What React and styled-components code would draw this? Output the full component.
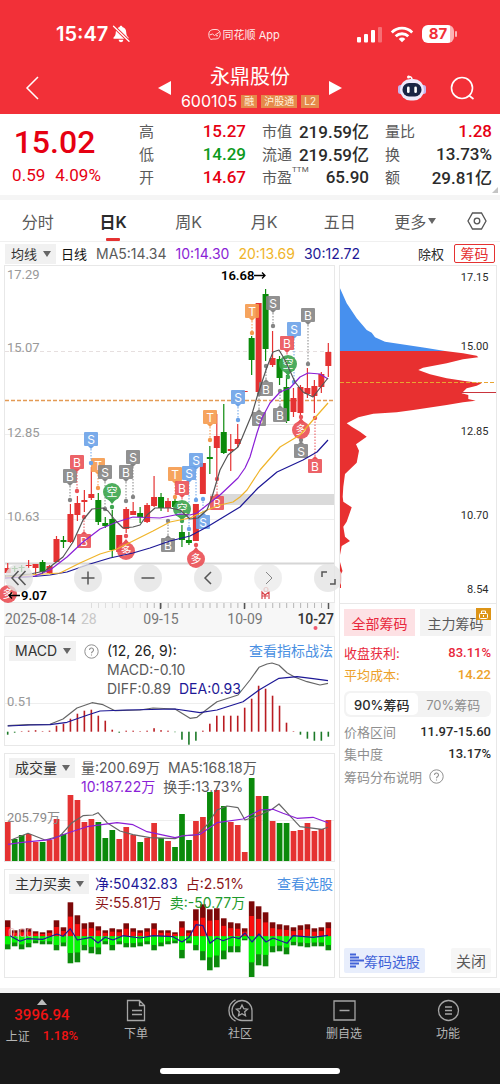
import React from "react";
import styled, { createGlobalStyle } from "styled-components";

const ui = `Inter, "Noto Sans CJK SC", sans-serif`;
const num = `Roboto, "Noto Sans CJK SC", sans-serif`;

const c = {
  brand: "#f23038",
  up: "#e53232",
  down: "#0b8a0b",
  rise: "#e60012",
  text: "#2b2b2b",
  sub: "#5a5a5a",
  mute: "#8f8f8f",
  line: "#e8e8e8",
  chip: "#f1f1f1",
  purple: "#8a1fd6",
  yellow: "#f0b429",
  navy: "#1d1896",
  blue: "#4a90e2",
};

const Global = createGlobalStyle`
  *, *::before, *::after { box-sizing: border-box; }
  body { margin: 0; background: #fff; font-family: ${ui}; color: ${c.text}; }
  button, select { font: inherit; color: inherit; border: 0; padding: 0; margin: 0; background: none; cursor: pointer; }
  svg { display: block; flex: none; }
  dl, dd, dt, h1, p { margin: 0; font-weight: inherit; }
`;

/* ---------- header ---------- */
const Header = styled.header`
  background: ${c.brand};
  color: #fff;
`;
const StatusBar = styled.div`
  display: flex;
  align-items: center;
  justify-content: space-between;
  height: 56px;
  padding: 12px 46px 0 56px;
`;
const StatusGroup = styled.div`
  display: flex;
  align-items: center;
  gap: ${(p) => p.$gap}px;
`;
const Clock = styled.span`
  font-size: 20px;
  font-weight: 600;
`;
const AppTag = styled.span`
  font-size: 11px;
  opacity: 0.9;
`;
const Battery = styled.span`
  position: relative;
  width: 32px;
  height: 18px;
  border-radius: 6px;
  background: linear-gradient(90deg, #fff 28px, #fbb3b6 28px);
  color: ${c.brand};
  font-size: 15px;
  font-weight: 700;
  line-height: 18px;
  text-align: center;
  &::after {
    content: "";
    position: absolute;
    right: -3px;
    top: 6px;
    width: 2px;
    height: 6px;
    border-radius: 1px;
    background: #fbb3b6;
  }
`;
const TitleBar = styled.div`
  display: grid;
  grid-template-columns: 1fr auto 1fr;
  align-items: center;
  height: 58px;
  padding: 6px 25px 0;
`;
const Stock = styled.div`
  display: flex;
  align-items: center;
  gap: 10px;
`;
const StockName = styled.div`
  display: flex;
  flex-direction: column;
  align-items: center;
`;
const Title = styled.h1`
  font-size: 20px;
  line-height: 26px;
`;
const CodeRow = styled.div`
  display: flex;
  align-items: center;
  gap: 4px;
  font-size: 16px;
  line-height: 22px;
`;
const Tag = styled.span`
  padding: 0 3px;
  background: #e58a4b;
  color: #fff3dc;
  font-size: 10px;
  line-height: 13px;
`;
const Actions = styled.div`
  display: flex;
  justify-content: flex-end;
  align-items: center;
  gap: 24px;
`;

/* ---------- quote ---------- */
const Quote = styled.section`
  position: relative;
  display: grid;
  grid-template-columns: 123fr 107fr 107fr 107fr;
  column-gap: 16px;
  height: 86px;
  padding: 5px 8px 0 0;
  border-bottom: 5px solid #f5f5f5;
  font-family: ${num};
`;
const PriceBox = styled.div`
  display: flex;
  flex-direction: column;
  align-items: center;
  color: ${c.rise};
  font-weight: 500;
`;
const Price = styled.span`
  padding-right: 14px;
  font-size: 32px;
  line-height: 46px;
`;
const Change = styled.span`
  display: flex;
  gap: 10px;
  padding-right: 10px;
  font-size: 17px;
  font-weight: 400;
  line-height: 20px;
`;
const Facts = styled.dl`
  display: flex;
  flex-direction: column;
`;
const Fact = styled.div`
  display: flex;
  justify-content: space-between;
  align-items: center;
  height: 23px;
  white-space: nowrap;
`;
const FactName = styled.dt`
  display: flex;
  font-size: 15px;
  color: ${c.sub};
`;
const Sup = styled.sup`
  font-size: 8px;
  line-height: 8px;
  vertical-align: top;
`;
const FactValue = styled.dd`
  font-size: 17px;
  font-weight: 500;
  color: ${(p) => p.$color || c.text};
`;
const Corner = styled.i`
  position: absolute;
  right: 2px;
  bottom: 2px;
  border: 3px solid #c4c4c4;
  border-top-color: transparent;
  border-left-color: transparent;
`;

/* ---------- tabs ---------- */
const Tabs = styled.nav`
  display: flex;
  height: 42px;
  border-bottom: 1px solid #f0f0f0;
`;
const Tab = styled.button`
  position: relative;
  display: flex;
  flex: 1;
  align-items: center;
  justify-content: center;
  gap: 2px;
  font-size: 16px;
  font-weight: ${(p) => (p.$on ? 600 : 400)};
  color: ${(p) => (p.$on ? c.text : c.sub)};
  &::after {
    content: "";
    display: ${(p) => (p.$on ? "block" : "none")};
    position: absolute;
    bottom: 0;
    width: 14px;
    height: 3px;
    border-radius: 1px;
    background: ${c.up};
  }
`;
const TabIcon = styled.button`
  display: grid;
  place-items: center;
  width: 47px;
`;

/* ---------- moving average row ---------- */
const MaRow = styled.div`
  display: flex;
  align-items: center;
  gap: 9px;
  height: 23px;
  padding: 0 5px;
  font-size: 14px;
  white-space: nowrap;
`;
const MaStart = styled.div`
  display: flex;
  align-items: center;
  gap: 5px;
  font-size: 13px;
  color: #111;
`;
const MaValue = styled.span`
  color: ${(p) => p.$color};
`;
const MaEnd = styled.div`
  display: flex;
  align-items: center;
  gap: 10px;
  margin-left: auto;
  font-size: 13px;
`;
const OutlineButton = styled.button`
  width: 41px;
  height: 19px;
  border: 1px solid ${c.up};
  border-radius: 2px;
  color: ${c.up};
  font-size: 14px;
  line-height: 17px;
`;
const Picker = styled.label`
  position: relative;
  display: block;
  height: 20px;
  background: ${c.chip};
  color: #333;
  svg {
    position: absolute;
    right: 5px;
    top: 7px;
    pointer-events: none;
  }
`;
const Select = styled.select`
  appearance: none;
  height: 20px;
  padding: 0 18px 0 6px;
  font-size: ${(p) => p.$size || 14}px;
  line-height: 20px;
`;

/* ---------- chart area ---------- */
const Body = styled.main`
  display: grid;
  grid-template-columns: 331fr 158fr;
  gap: 4px;
  padding: 0 3px 10px 4px;
  border-bottom: 5px solid #f3f3f3;
`;
const Column = styled.div`
  display: flex;
  flex-direction: column;
  min-width: 0;
`;
const Panel = styled.section`
  position: relative;
  display: grid;
  border: 1px solid ${c.line};
  margin-bottom: ${(p) => p.$gap || 0}px;
  > * {
    grid-area: 1 / 1;
  }
`;
const Chart = styled.svg`
  width: 100%;
  height: auto;
  font-family: ${num};
`;
const AxisStrip = styled.div`
  background: #f7f7f7;
`;
const PanelHead = styled.div`
  z-index: 1;
  display: flex;
  align-items: flex-start;
  align-self: start;
  gap: ${(p) => p.$gap || 6}px;
  padding: 4px 1px 0 4px;
  font-size: 14px;
`;
const Readout = styled.div`
  display: flex;
  flex-direction: column;
`;
const ReadLine = styled.div`
  display: flex;
  gap: 8px;
  font-size: 14px;
  line-height: 19px;
  color: ${c.sub};
  white-space: nowrap;
`;
const HeadLink = styled.a`
  margin-left: auto;
  color: ${c.blue};
  font-size: 14px;
  line-height: 20px;
  text-decoration: none;
  white-space: nowrap;
`;
const HelpSlot = styled.button`
  height: 20px;
  padding: 0 6px;
`;
const Controls = styled.div`
  position: absolute;
  z-index: 2;
  left: 0;
  right: -8px;
  bottom: 10px;
  display: flex;
  gap: 32px;
`;
const RoundButton = styled.button`
  display: grid;
  place-items: center;
  width: 28px;
  height: 28px;
  border-radius: 50%;
  background: rgba(228, 228, 228, 0.8);
  opacity: ${(p) => (p.$dim ? 0.7 : 1)};
  &:first-child {
    margin-right: auto;
  }
`;

/* ---------- chip distribution ---------- */
const ChipPanel = styled.aside`
  display: flex;
  flex-direction: column;
  border: 1px solid ${c.line};
`;
const ChipBody = styled.div`
  display: flex;
  flex: 1;
  flex-direction: column;
  padding: 5px 5px 4px 4px;
  border-top: 1px solid ${c.line};
`;
const Pair = styled.div`
  display: grid;
  grid-template-columns: 1fr 1fr;
  gap: 5px;
  margin-bottom: 5px;
`;
const ScopeButton = styled.button`
  position: relative;
  height: 27px;
  background: ${(p) => (p.$on ? "#fde1e4" : "#f3f3f3")};
  color: ${(p) => (p.$on ? "#e8283c" : c.sub)};
  font-size: 14px;
  white-space: nowrap;
`;
const LockBadge = styled.span`
  position: absolute;
  right: 0;
  top: -1px;
  display: grid;
  place-items: center;
  width: 15px;
  height: 12px;
  background: #dd9416;
`;
const StatRow = styled.div`
  display: flex;
  justify-content: space-between;
  align-items: center;
  height: 22px;
  font-size: 13px;
  color: ${(p) => p.$color || c.mute};
  white-space: nowrap;
`;
const StatValue = styled.span`
  font-family: ${num};
  font-weight: 500;
  color: ${(p) => p.$color || "inherit"};
`;
const Segment = styled.div`
  display: grid;
  grid-template-columns: 1fr 1fr;
  margin: 6px 0 3px;
  padding: 2px;
  border-radius: 6px;
  background: #f3f3f3;
`;
const SegmentButton = styled.button`
  height: 22px;
  border-radius: 5px;
  background: ${(p) => (p.$on ? "#fff" : "transparent")};
  color: ${(p) => (p.$on ? c.text : c.mute)};
  font-size: 13px;
  font-weight: ${(p) => (p.$on ? 500 : 400)};
  white-space: nowrap;
`;
const HelpLine = styled.button`
  display: flex;
  align-items: center;
  gap: 7px;
  height: 24px;
  color: ${c.mute};
  font-size: 13px;
`;
const ChipFoot = styled.div`
  display: flex;
  justify-content: space-between;
  margin-top: auto;
`;
const FootButton = styled.button`
  display: flex;
  align-items: center;
  height: 25px;
  padding: 0 5px;
  border-radius: 2px;
  background: ${(p) => (p.$primary ? "#e8eefc" : "#f6f6f6")};
  color: ${(p) => (p.$primary ? "#4263d8" : c.sub)};
  font-size: ${(p) => (p.$primary ? 14 : 15)}px;
  white-space: nowrap;
`;

/* ---------- bottom bar ---------- */
const Bottom = styled.footer`
  padding-bottom: 10px;
  background: #191919;
  color: #b5b5b5;
`;
const BottomNav = styled.nav`
  display: grid;
  grid-template-columns: 84fr 104fr 104fr 104fr 104fr;
  height: 75px;
`;
const NavItem = styled.button`
  display: flex;
  flex-direction: column;
  align-items: center;
  padding-top: 6px;
  gap: 3px;
  font-size: 12px;
  line-height: 18px;
`;
const IndexItem = styled.button`
  display: flex;
  flex-direction: column;
  align-items: center;
  padding-top: 6px;
  gap: 1px;
  font-size: 12px;
`;
const IndexValue = styled.span`
  color: #f01414;
  font-family: ${num};
  font-size: ${(p) => p.$size}px;
  font-weight: 500;
  line-height: 19px;
`;
const IndexRow = styled.span`
  display: flex;
  align-items: center;
  gap: 13px;
`;
const HomeBar = styled.div`
  width: 36%;
  height: 6px;
  margin: 0 auto;
  border-radius: 3px;
  background: #fff;
`;

/* ---------- data ---------- */
const xAt = (i) => 7.7 + 6.97 * i;

// [direction, body top, body bottom, wick top, wick bottom]
const candles = [
  ["r", 568, 573, 563, 573], ["g", 568, 569, 566, 572], ["g", 567, 568, 565, 572], ["r", 565, 566, 560, 568],
  ["r", 564, 568, 564, 574], ["g", 562, 572, 560, 574], ["r", 566, 573, 565, 574], ["r", 539, 562, 536, 562],
  ["g", 540, 542, 536, 548], ["r", 514, 542, 504, 543], ["r", 503, 515, 496, 521], ["r", 500, 502, 490, 512],
  ["r", 494, 498, 467, 500], ["g", 500, 522, 493, 525], ["g", 523, 526, 517, 528], ["g", 519, 550, 510, 557],
  ["r", 535, 552, 535, 552], ["r", 509, 529, 507, 533], ["r", 511, 515, 502, 515], ["g", 513, 517, 507, 523],
  ["r", 505, 522, 503, 523], ["r", 497, 506, 476, 507], ["g", 497, 508, 493, 511], ["r", 501, 508, 498, 512],
  ["g", 501, 507, 499, 507], ["g", 532, 540, 525, 547], ["g", 540, 543, 532, 545], ["r", 504, 541, 504, 541],
  ["r", 463, 494, 463, 494], ["g", 457, 459, 446, 474], ["r", 436, 448, 414, 478], ["g", 432, 453, 404, 454],
  ["r", 449, 451, 434, 471], ["r", 439, 444, 424, 447], ["r", 391, 392, 391, 392], ["g", 338, 360, 336, 375],
  ["r", 303, 392, 303, 392], ["g", 294, 349, 289, 361], ["r", 358, 365, 331, 367], ["g", 359, 378, 356, 385],
  ["g", 387, 421, 375, 423], ["r", 398, 412, 388, 417], ["r", 387, 413, 385, 417], ["r", 388, 394, 368, 398],
  ["r", 386, 396, 380, 413], ["r", 374, 387, 372, 393], ["r", 352, 366, 343, 377],
];

const ma = [
  [c.navy, "5,578 28,577 50,575 67,572 90,564 110,558 133,553 150,548 170,541 190,536 207,527 240,507 258,488 277,472 303,460 317,452 328,440"],
  [c.yellow, "5,577 28,575 60,573 80,563 100,554 117,549 133,541 153,531 170,522 190,518 207,510 220,505 233,502 240,497 247,490 260,470 280,447 300,435 313,420 328,403"],
  [c.purple, "5,578 35,576 50,570 67,557 83,542 100,529 117,522 133,517 160,518 180,514 190,515 197,513 207,505 220,495 238,478 245,468 250,457 257,433 262,418 270,403 280,392 290,388 300,377 308,373 320,374 328,379"],
  ["#555", "5,576 30,574 45,571 55,563 63,557 73,542 83,520 92,509 103,508 108,511 115,520 123,528 133,527 140,525 147,515 155,508 170,508 180,510 190,519 198,518 207,510 212,497 220,470 228,455 238,447 242,438 252,414 257,397 267,367 273,352 279,350 285,360 295,382 303,392 313,397 320,388 328,378"],
];

const tone = { gray: "#858585", red: "#ea5258", blue: "#6ba2e8", orange: "#f59a4d", green: "#3fa650" };
// [x, y of the flag, y of the anchor dot, letter, tone]
const flags = [
  [70, 476, 500, "B", "gray"], [77, 462, 491, "B", "red"], [98, 465, 488, "T", "orange"], [91, 439, 463, "S", "blue"],
  [105, 472, 509, "S", "gray"], [84, 541, 517, "B", "red"], [126, 472, 501, "B", "gray"], [133, 457, 497, "S", "gray"],
  [168, 545, 521, "B", "gray"], [175, 474, 497, "T", "orange"], [189, 473, 529, "S", "blue"], [182, 488, 505, "B", "red"],
  [196, 460, 500, "S", "blue"], [203, 522, 499, "S", "blue"], [217, 503, 479, "B", "red"], [210, 417, 440, "T", "orange"],
  [238, 397, 420, "S", "blue"], [252, 311, 333, "T", "orange"], [273, 303, 326, "S", "gray"], [308, 315, 364, "B", "gray"],
  [266, 389, 366, "B", "gray"], [259, 419, 394, "S", "gray"], [280, 415, 391, "B", "gray"], [294, 329, 382, "S", "blue"],
  [287, 343, 360, "B", "red"], [301, 451, 440, "S", "gray"], [315, 466, 418, "B", "red"],
];
const seals = [
  [112, 492, 507, "空", "green"], [126, 551, 536, "多", "red"], [182, 509, 521, "空", "green"], [196, 559, 545, "多", "red"],
  [288, 364, 377, "空", "green"], [301, 430, 417, "多", "red"], [8, 594, 594, "多", "red"],
];

const macdBars = [-3, -1, 0.5, 1, 1.5, 0.5, 1, 6, 8, 13, 18, 21, 22, 16, 11, 2, -1, 1, 1, 0.5, 1, 3.5, 1.5, 1, -0.5, -8, -13, -9, 1, 8, 16, 16, 16, 16, 24, 33, 46, 43, 36, 26, 9, 0.5, -3, -7, -9, -9, -5];

const volumes = "39r 22g 26g 27r 19r 19g 21r 42r 27g 66r 61r 39r 42r 39g 23g 31g 22r 34r 26r 19g 23r 38r 23g 20r 14g 47g 21g 40r 44r 69g 71r 55g 39r 36r 9r 83g 65r 65g 40r 38g 38g 30r 31r 38r 30r 32r 41r"
  .split(" ")
  .map((v) => [parseInt(v, 10), v.slice(-1)]);

const buys = [16, 6, 7, 8, 5, 4, 6, 16, 9, 34, 21, 13, 14, 10, 6, 8, 7, 13, 8, 6, 8, 13, 6, 6, 4, 15, 6, 27, 32, 27, 28, 18, 14, 13, 8, 35, 30, 24, 14, 12, 11, 9, 11, 12, 8, 9, 14];
const sells = [13, 10, 13, 11, 7, 8, 8, 14, 10, 27, 26, 14, 17, 18, 8, 14, 8, 11, 11, 10, 8, 14, 10, 8, 7, 22, 7, 14, 24, 34, 31, 23, 16, 16, 4, 42, 29, 30, 16, 15, 18, 9, 10, 11, 10, 10, 14];

/* ---------- small drawings ---------- */
const Caret = () => (
  <svg width="8" height="6" viewBox="0 0 8 6"><path d="M0 0h8L4 6z" fill="#666" /></svg>
);
const Help = () => (
  <svg width="15" height="15" viewBox="0 0 15 15" fill="none" stroke="#8f8f8f">
    <circle cx="7.5" cy="7.5" r="6.7" />
    <path d="M5.5 6a2 2 0 1 1 3 1.7c-.7.4-1 .8-1 1.5M7.5 10.4v1.2" strokeWidth="1.1" />
  </svg>
);
const Line = ({ d, color, w = 1.2 }) => <polyline points={d} fill="none" stroke={color} strokeWidth={w} strokeLinejoin="round" />;

function Flag({ x, y, dot, letter, color }) {
  const down = dot > y;
  const edge = down ? y + 7 : y - 7;
  return (
    <g>
      <path d={`M${x} ${edge}V${dot}`} stroke={color} strokeDasharray="1.5 1.5" />
      <circle cx={x} cy={dot} r="2.2" fill={color} />
      <rect x={x - 7} y={y - 7} width="14" height="14" rx="1" fill={color} opacity="0.9" />
      <path d={down ? `M${x - 3} ${edge}h6l-3 3z` : `M${x - 3} ${edge}h6l-3 -3z`} fill={color} />
      <text x={x} y={y + 4.5} fill="#fff" fontSize="12" textAnchor="middle" fontFamily="Inter, sans-serif">{letter}</text>
    </g>
  );
}

function Seal({ x, y, dot, letter, color }) {
  const s = dot > y ? 1 : -1;
  return (
    <g>
      <circle cx={x} cy={dot} r="2.2" fill={color} />
      {dot !== y && <path d={`M${x - 4} ${y + s * 7}h8l-4 ${s * 5}z`} fill={color} />}
      <circle cx={x} cy={y} r="9" fill={color} opacity="0.92" />
      <text x={x} y={y + 4} fill="#fff" fontSize="11" textAnchor="middle">{letter}</text>
    </g>
  );
}

function CandleChart() {
  return (
    <Chart viewBox="5 266 329 336" overflow="visible">
      <path d="M5 434.500H334M5 519.500H334" stroke="#eee" />
      <path d="M262 424.500H334" stroke="#e4e4e4" />
      <path d="M5 351.500H334" stroke="#e6dfdf" strokeDasharray="4 3" />
      <path d="M5 400.500H334" stroke="#e39a55" strokeWidth="1.300" strokeDasharray="4 2" />
      <rect x="210" y="494" width="124" height="11" fill="#dadada" />
      <path d="M5 563.500H334" stroke="#d6d6d6" strokeWidth="2" />
      <g fill="#999" fontSize="13">
        <text x="7" y="279">17.29</text>
        <text x="7" y="352">15.07</text>
        <text x="7" y="437">12.85</text>
        <text x="7" y="521">10.63</text>
      </g>
      {candles.map(([k, t, b, h, l], i) => (
        <g key={i} fill={k === "r" ? c.up : c.down} stroke={k === "r" ? c.up : c.down}>
          <path d={`M${xAt(i)} ${h}V${l}`} strokeWidth="1.200" />
          <rect x={xAt(i) - 3} y={t} width="6" height={Math.max(1, b - t)} stroke="none" />
        </g>
      ))}
      {flags.map(([x, y, dot, letter, t], i) => <Flag key={i} x={x} y={y} dot={dot} letter={letter} color={tone[t]} />)}
      {seals.map(([x, y, dot, letter, t], i) => <Seal key={i} x={x} y={y} dot={dot} letter={letter} color={tone[t]} />)}
      {ma.map(([color, d]) => <Line key={color} d={d} color={color} />)}
      <g fill="#000" fontSize="13" fontWeight="600">
        <text x="221" y="280">16.68</text>
        <text x="21" y="600">9.07</text>
      </g>
      <g fill="none" stroke="#000" strokeWidth="1.300">
        <path d="M254 275.500H265M262 272.500L265 275.500L262 278.500" />
        <path d="M20 595.500H9M12 592.500L9 595.500L12 598.500" />
      </g>
      <g fill="none" stroke="#d9434a" strokeWidth="1.200">
        <path d="M262 599v-7l3 3v4M269 599v-7l-4 3M262 596h6" />
        <circle cx="266" cy="589.500" r="2" stroke="#eeb0b0" />
      </g>
    </Chart>
  );
}

function TimeAxis() {
  const ticks = Array.from({ length: 35 }, (_, i) => 328.5 - i * 6.97);
  return (
    <AxisStrip>
      <Chart viewBox="4 603 331 33">
        {ticks.map((x, i) => <path key={i} d={`M${x} 603v5`} stroke={i > 26 ? "#ddd" : "#b5b5b5"} />)}
        <path d="M160.500 603v6M244.500 603v6M328.500 603v6" stroke="#555" strokeWidth="1.500" />
        <g fill="#777" fontSize="14">
          <text x="5" y="624">2025-08-14</text>
          <text x="81" y="624" fill="#c8c8c8">28</text>
          <text x="161" y="624" textAnchor="middle">09-15</text>
          <text x="245" y="624" textAnchor="middle">10-09</text>
          <text x="334" y="624" textAnchor="end" fontWeight="500" fill="#333">10-27</text>
        </g>
        <circle cx="315.500" cy="628" r="2" fill="#ee5a6e" />
      </Chart>
    </AxisStrip>
  );
}

function MacdChart() {
  return (
    <Chart viewBox="5 637 329 108">
      <path d="M5 703.500H334" stroke="#eee" />
      <text x="7" y="706" fill="#999" fontSize="13">0.51</text>
      {macdBars.map((v, i) => (
        <rect key={i} x={xAt(i) - 0.8} y={v > 0 ? 731.7 - v : 731.7} width="1.600" height={Math.abs(v)} fill={v > 0 ? "#b91c22" : "#1c7a28"} />
      ))}
      <Line color="#666" d="7.700,725.700 28,724.700 50,724.300 63,719 77,708 92,702.700 103,704.700 115,710.700 140,710 153,708 175,709 190,718.300 197,717.300 207,709.300 217,701.700 238,695 250,680 259,667.300 267,664 272,663 279,665.300 287,672.700 295,677.300 307,681.700 320,685 328,683.300" />
      <Line color="#1d1896" d="7.700,726 30,725 50,724.700 67,722.300 87,715.300 100,711 127,710 175,709 200,712.700 217,710 243,701.700 259,690 279,678.300 297,676.700 313,678.700 328,680.700" />
    </Chart>
  );
}

function VolumeChart() {
  return (
    <Chart viewBox="5 754 329 107">
      <path d="M5 820.500H334" stroke="#eee" />
      {volumes.map(([v, k], i) => (
        <rect key={i} x={xAt(i) - 2.8} y={861 - v} width="5.700" height={v} fill={k === "r" ? c.up : c.down} />
      ))}
      <text x="7" y="822" fill="#8b8b8b" fontSize="13">205.79万</text>
      <Line color="#666" d="11,840 28,833.300 45,840 60,836 72,822.700 83,815.700 93,815 98,812.700 107,822.700 120,831 133,834.700 150,837.700 175,838.700 182,835.700 197,835 207,825 217,810 227,806 238,807.700 245,820 260,815 272,809.300 279,804 287,812.700 300,826.700 322,829.300 328,827.300" />
      <Line color={c.purple} d="8,844.300 20,842.700 50,839.700 67,833.300 87,826.700 117,822.700 133,824.700 147,831.700 175,837.700 182,836 200,834.300 217,822.700 243,819 260,810 273,809.300 283,813.300 297,818.300 313,817.300 328,822.700" />
    </Chart>
  );
}

function FlowChart() {
  const zero = 936.3;
  return (
    <Chart viewBox="5 870 329 107">
      {buys.map((v, i) => (
        <g key={i}>
          <rect x={xAt(i) - 2.8} y={zero - v} width="5.600" height={v} fill="#7d0808" />
          <rect x={xAt(i) - 2.3} y={zero - v * 0.58} width="4.600" height={v * 0.58} fill="#fb0d0d" />
          <rect x={xAt(i) - 2.8} y={zero} width="5.600" height={sells[i]} fill="#0b8a0b" />
          <rect x={xAt(i) - 2.8} y={zero} width="5.600" height={sells[i] * 0.62} fill="#05f705" />
        </g>
      ))}
      <text x="8" y="937" fill="#e9b3b3" fontSize="13" opacity="0.700">0.00</text>
      <Line color="#1d1896" d="10,935.700 20,941.300 27,938.700 43,939.300 57,934 63,936.300 70.300,928.700 77.300,940 91,937.300 98,943 105,937.300 113,940 123,935.700 140,938 153,935.700 173,936.700 182,942 189,937.300 196,924.700 203,925.700 210,943.300 217,938 223,940.700 233,937 239,938.700 245,933 252,942 259,934 266,942 273,938 287,943.300 293,935.700 313,937.300 328,935.300" />
    </Chart>
  );
}

function ChipChart() {
  return (
    <Chart viewBox="340 266 156 337">
      <path fill="#4790ee" d="M340 288.300L346.700 303.300L356.700 318.300L366.700 330L371.700 332.700L375 337.300L385 341.700L406.700 345L425 347.700L445 351H340z" />
      <path
        fill="#e83030"
        d="M340 351H445L463 353.300L476.700 355.700L478.300 357.300L463 359.300L446.700 363.300L423 367.700L418.300 370L430 374.300L446.700 378.300L463 380.700L481.700 383.300L476.700 385.700L466.700 388.300L461.700 393.300L468.300 395V399L475.700 400.700L463 402.300L446.700 405L413.300 410L396.700 412.300L373.300 413.700L358.300 417.300L346.700 423.300L351.700 426.700L360 431.700L366.700 436.700L356 444.300L359 450.700L356.700 462.700L345 474L343.300 486.700L342.700 496.700L343.300 501.700L351.700 507.300L346.700 521.700L343.300 526.700L345 536.700L350 541L341.700 546L340 555z"
      />
      <path d="M340 562l2.500 9-1.500 3v14h-1z" fill="#e83030" />
      <path d="M340 382.500H496" stroke="#e8a532" strokeWidth="1.200" strokeDasharray="4 2" />
      <path d="M461 392.500H496" stroke="#c9343c" strokeWidth="1.200" />
      <g fill="#2b2b2b" fontSize="11" textAnchor="end">
        <text x="488.500" y="281">17.15</text>
        <text x="488.500" y="350">15.00</text>
        <text x="488.500" y="435">12.85</text>
        <text x="488.500" y="519">10.70</text>
        <text x="488.500" y="593">8.54</text>
      </g>
    </Chart>
  );
}

const Glyph = ({ d, s = 1.5 }) => (
  <svg width="18" height="18" viewBox="0 0 18 18" fill="none" stroke="#555" strokeWidth={s}><path d={d} /></svg>
);

const facts = [
  [["高", "15.27", c.rise], ["低", "14.29", "#0c9a1c"], ["开", "14.67", c.rise]],
  [["市值", "219.59亿"], ["流通", "219.59亿"], ["市盈", "65.90", null, "TTM"]],
  [["量比", "1.28", c.rise], ["换", "13.73%"], ["额", "29.81亿"]],
];

const navItems = [
  ["下单", <path key="a" d="M2.500 1.500h12l5 5v15h-17zM14.500 1.500v5h5M7 11.500h10M7 15.500h10" />],
  ["社区", <g key="b"><path d="M13 1.500a9.700 9.700 0 1 0 0 20h10v-10a10 10 0 0 0-10-10zM6.500 .8a12 12 0 0 0 0 21.400" /><path d="M13 6l1.700 3.600 3.900.5-2.900 2.700.8 3.900-3.500-1.900-3.500 1.900.8-3.900-2.900-2.700 3.900-.5z" /></g>],
  ["删自选", <path key="c" d="M1 2h21v19h-21zM6.500 11.500h10" />],
  ["功能", <g key="d"><circle cx="11.500" cy="11.500" r="10" /><path d="M8 8h7M8 11.500h7M8 15h7" /></g>],
];

export default function App() {
  return (
    <>
      <Global />
      <Header>
        <StatusBar>
          <StatusGroup $gap={4}>
            <Clock>15:47</Clock>
            <svg width="18" height="18" viewBox="0 0 18 18">
              <path d="M9 .8c.8 0 1.300.5 1.400 1.100 2.400.7 3.700 2.600 3.800 5 .1 3 .9 4.300 2.300 5.600v1.300H1.500v-1.300C2.900 11.200 3.700 9.900 3.800 6.900c.1-2.400 1.400-4.300 3.800-5C7.700 1.300 8.200.8 9 .8zM6.600 14.800h4.800a2.400 2.400 0 0 1-4.800 0z" fill="#fff" />
              <path d="M1.500 1.200L17 16.300" stroke={c.brand} strokeWidth="3.200" />
              <path d="M1.500 1.200L17 16.300" stroke="#fff" strokeWidth="1.300" strokeLinecap="round" />
            </svg>
          </StatusGroup>
          <StatusGroup $gap={2}>
            <svg width="13" height="13" viewBox="0 0 13 13" fill="none" stroke="#ffd9da">
              <path d="M3 11.500C1 10.500.8 8 .8 6 .8 3 3 1.500 6 1.500h2C11 1.500 12.200 3.500 12.200 6S11 11 8 11H5z" />
              <path d="M1.500 7l3-1 2 1.500L11.500 4" />
              <circle cx="9" cy="7.800" r=".8" fill="#fff" stroke="none" />
            </svg>
            <AppTag>同花顺 App</AppTag>
          </StatusGroup>
          <StatusGroup $gap={8}>
            <svg width="25" height="17" viewBox="0 0 25 17" fill="#fff">
              <rect x="0" y="11" width="4" height="5.500" rx="1" />
              <rect x="7" y="8" width="4" height="8.500" rx="1" />
              <rect x="14" y="4" width="4" height="12.500" rx="1" />
              <rect x="21" y="1" width="4" height="15.500" rx="1" opacity="0.300" />
            </svg>
            <svg width="24" height="17" viewBox="0 0 24 17" fill="none" stroke="#fff" strokeWidth="2.800">
              <path d="M1.800 6.400a14.500 14.500 0 0 1 20.400 0M5.700 10.300a9 9 0 0 1 12.600 0" />
              <path d="M12 16.300l-3.300-3.400a4.700 4.700 0 0 1 6.600 0z" fill="#fff" stroke="none" />
            </svg>
            <Battery>87</Battery>
          </StatusGroup>
        </StatusBar>
        <TitleBar>
          <button aria-label="返回">
            <svg width="14" height="24" viewBox="0 0 14 24" fill="none" stroke="#fff" strokeWidth="1.500"><path d="M13 1L2 12l11 11" /></svg>
          </button>
          <Stock>
            <button aria-label="上一只"><svg width="13" height="14" viewBox="0 0 13 14"><path d="M13 0v14L0 7z" fill="#fff" /></svg></button>
            <StockName>
              <Title>永鼎股份</Title>
              <CodeRow>
                600105
                <Tag>融</Tag>
                <Tag>沪股通</Tag>
                <Tag>L2</Tag>
              </CodeRow>
            </StockName>
            <button aria-label="下一只"><svg width="13" height="14" viewBox="0 0 13 14"><path d="M0 0v14l13-7z" fill="#fff" /></svg></button>
          </Stock>
          <Actions>
            <button aria-label="助手">
              <svg width="28" height="26" viewBox="0 0 28 26">
                <path d="M14 4.500c0-2-1.200-3-3.500-3" stroke="#fff" strokeWidth="1.600" fill="none" />
                <circle cx="10.500" cy="2" r="1.500" fill="#fff" />
                <rect x="0" y="10" width="5" height="9" rx="2.500" fill="#c6b6ee" />
                <rect x="23" y="10" width="5" height="9" rx="2.500" fill="#c6b6ee" />
                <rect x="2" y="4" width="24" height="21.500" rx="10.500" fill="#eee9fb" />
                <rect x="4.500" y="8" width="19" height="13.500" rx="6.500" fill="#1a2344" />
                <rect x="9" y="11.500" width="2.600" height="6.500" rx="1.300" fill="#fff" />
                <rect x="16.300" y="11.500" width="2.600" height="6.500" rx="1.300" fill="#fff" />
              </svg>
            </button>
            <button aria-label="搜索">
              <svg width="25" height="25" viewBox="0 0 25 25" fill="none" stroke="#fff" strokeWidth="1.600"><circle cx="12" cy="12" r="10.500" /><path d="M19 19.500l4.500 3.500" /></svg>
            </button>
          </Actions>
        </TitleBar>
      </Header>

      <Quote>
        <PriceBox>
          <Price>15.02</Price>
          <Change><span>0.59</span><span>4.09%</span></Change>
        </PriceBox>
        {facts.map((col, i) => (
          <Facts key={i}>
            {col.map(([name, value, color, sup]) => (
              <Fact key={name}>
                <FactName>{name}{sup && <Sup>{sup}</Sup>}</FactName>
                <FactValue $color={color}>{value}</FactValue>
              </Fact>
            ))}
          </Facts>
        ))}
        <Corner />
      </Quote>

      <Tabs>
        <Tab>分时</Tab>
        <Tab $on>日K</Tab>
        <Tab>周K</Tab>
        <Tab>月K</Tab>
        <Tab>五日</Tab>
        <Tab>更多<Caret /></Tab>
        <TabIcon aria-label="设置">
          <svg width="20" height="18" viewBox="0 0 20 18" fill="none" stroke="#555" strokeWidth="1.300"><path d="M5.500 1h9L19 9l-4.500 8h-9L1 9z" /><circle cx="10" cy="9" r="2.800" /></svg>
        </TabIcon>
      </Tabs>

      <MaRow>
        <MaStart>
          <Picker><Select aria-label="均线" $size={13}><option>均线</option></Select><Caret /></Picker>
          <span>日线</span>
        </MaStart>
        <MaValue $color={c.sub}>MA5:14.34</MaValue>
        <MaValue $color={c.purple}>10:14.30</MaValue>
        <MaValue $color={c.yellow}>20:13.69</MaValue>
        <MaValue $color={c.navy}>30:12.72</MaValue>
        <MaEnd>
          <button>除权</button>
          <OutlineButton>筹码</OutlineButton>
        </MaEnd>
      </MaRow>

      <Body>
        <Column>
          <Panel>
            <CandleChart />
            <Controls>
              <RoundButton aria-label="最早"><Glyph d="M8.500 2L2 9l6.500 7M15.500 2L9 9l6.500 7" /></RoundButton>
              <RoundButton aria-label="放大"><Glyph d="M2.500 9h13M9 2.500v13" /></RoundButton>
              <RoundButton aria-label="缩小"><Glyph d="M2.500 9h13" /></RoundButton>
              <RoundButton aria-label="左移"><Glyph d="M12 3L6 9l6 6" /></RoundButton>
              <RoundButton aria-label="右移" $dim><Glyph s={1} d="M7 3l6 6-6 6" /></RoundButton>
              <RoundButton aria-label="全屏"><Glyph d="M3 8V3h5M16 10v5h-5" /></RoundButton>
            </Controls>
          </Panel>
          <TimeAxis />
          <Panel $gap={7}>
            <MacdChart />
            <PanelHead $gap={2}>
              <Picker><Select aria-label="指标"><option>MACD</option></Select><Caret /></Picker>
              <HelpSlot aria-label="指标说明"><Help /></HelpSlot>
              <Readout>
                <ReadLine><MaValue $color="#222">(12, 26, 9):</MaValue></ReadLine>
                <ReadLine>MACD:-0.10</ReadLine>
                <ReadLine><span>DIFF:0.89</span><MaValue $color={c.navy}>DEA:0.93</MaValue></ReadLine>
              </Readout>
              <HeadLink href="#macd">查看指标战法</HeadLink>
            </PanelHead>
          </Panel>
          <Panel $gap={7}>
            <VolumeChart />
            <PanelHead>
              <Picker><Select aria-label="指标"><option>成交量</option></Select><Caret /></Picker>
              <Readout>
                <ReadLine><span>量:200.69万</span><span>MA5:168.18万</span></ReadLine>
                <ReadLine><MaValue $color={c.purple}>10:187.22万</MaValue><span>换手:13.73%</span></ReadLine>
              </Readout>
            </PanelHead>
          </Panel>
          <Panel>
            <FlowChart />
            <PanelHead>
              <Picker><Select aria-label="指标"><option>主力买卖</option></Select><Caret /></Picker>
              <Readout>
                <ReadLine><MaValue $color={c.navy}>净:50432.83</MaValue><MaValue $color="#8b1518">占:2.51%</MaValue></ReadLine>
                <ReadLine><MaValue $color="#8b1518">买:55.81万</MaValue><MaValue $color="#1f9a2c">卖:-50.77万</MaValue></ReadLine>
              </Readout>
              <HeadLink href="#pick">查看选股</HeadLink>
            </PanelHead>
          </Panel>
        </Column>

        <ChipPanel>
          <ChipChart />
          <ChipBody>
            <Pair>
              <ScopeButton $on>全部筹码</ScopeButton>
              <ScopeButton>
                主力筹码
                <LockBadge>
                  <svg width="9" height="9" viewBox="0 0 9 9" fill="none" stroke="#fff"><rect x=".5" y="3.500" width="8" height="5" rx="1" /><path d="M2.500 3.500V1h4v2.500M4.500 5v2" /></svg>
                </LockBadge>
              </ScopeButton>
            </Pair>
            <StatRow $color="#e8283c"><span>收盘获利:</span><StatValue>83.11%</StatValue></StatRow>
            <StatRow $color="#eda12a"><span>平均成本:</span><StatValue>14.22</StatValue></StatRow>
            <Segment>
              <SegmentButton $on>90%筹码</SegmentButton>
              <SegmentButton>70%筹码</SegmentButton>
            </Segment>
            <StatRow><span>价格区间</span><StatValue $color={c.text}>11.97-15.60</StatValue></StatRow>
            <StatRow><span>集中度</span><StatValue $color={c.text}>13.17%</StatValue></StatRow>
            <HelpLine>筹码分布说明<Help /></HelpLine>
            <ChipFoot>
              <FootButton $primary>
                <svg width="15" height="15" viewBox="0 0 15 15" stroke="#4263d8" strokeWidth="2"><path d="M1 1.500h6M1 4.500h9M1 7.500h14M1 10.500h9M1 13.500h6" /></svg>
                筹码选股
              </FootButton>
              <FootButton>关闭</FootButton>
            </ChipFoot>
          </ChipBody>
        </ChipPanel>
      </Body>

      <Bottom>
        <BottomNav>
          <IndexItem>
            <svg width="10" height="6" viewBox="0 0 10 6"><path d="M5 0l5 6H0z" fill="#bbb" /></svg>
            <IndexValue $size={15}>3996.94</IndexValue>
            <IndexRow>上证<IndexValue $size={13}>1.18%</IndexValue></IndexRow>
          </IndexItem>
          {navItems.map(([label, art]) => (
            <NavItem key={label}>
              <svg width="23" height="23" viewBox="0 0 23 23" fill="none" stroke="#a5a5a5" strokeWidth="1.300" overflow="visible">{art}</svg>
              {label}
            </NavItem>
          ))}
        </BottomNav>
        <HomeBar />
      </Bottom>
    </>
  );
}
